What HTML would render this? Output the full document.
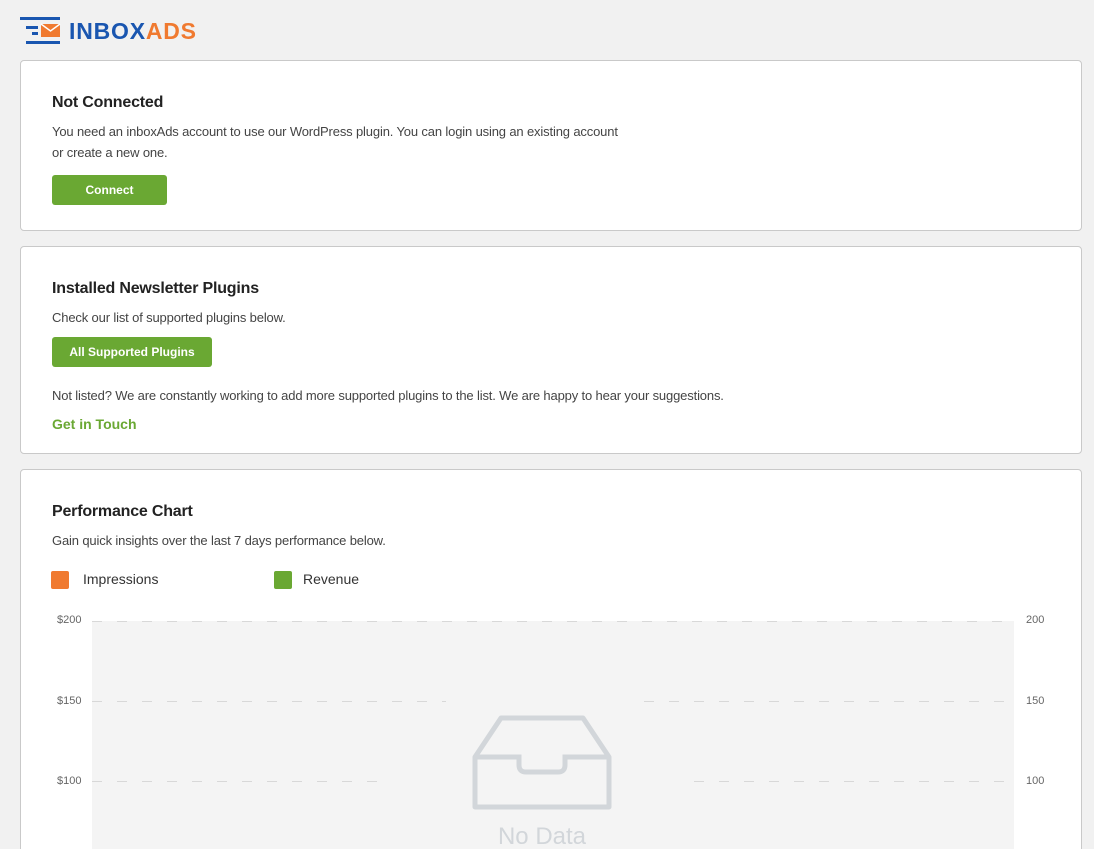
<!DOCTYPE html>
<html><head><meta charset="utf-8"><style>
*{margin:0;padding:0;box-sizing:border-box}
html,body{width:1094px;height:849px;overflow:hidden}
body{background:#f1f1f1;font-family:"Liberation Sans",sans-serif;color:#333;position:relative}
.card{position:absolute;left:20px;width:1062px;background:#fff;border:1px solid #c9c9c9;border-radius:4px}
.t{position:absolute;left:31px;font-size:16px;font-weight:bold;color:#222;letter-spacing:-0.2px}
.p{position:absolute;left:31px;font-size:13px;color:#444;line-height:21px;letter-spacing:-0.15px}
.btn{position:absolute;left:31px;background:#6aa833;color:#fff;font-size:12px;font-weight:bold;border-radius:3px;text-align:center}
.ax{position:absolute;font-size:11px;color:#666}
.dash{position:absolute;height:1px;background:repeating-linear-gradient(90deg,#d8d8d8 0 10px,transparent 10px 25px)}
</style></head><body>
<svg style="position:absolute;left:20px;top:16px" width="42" height="30" viewBox="0 0 42 30">
<rect x="0" y="1" width="40" height="3" fill="#1a56b0"/>
<rect x="6" y="10" width="12" height="3" fill="#1a56b0"/>
<rect x="12" y="16" width="6" height="3" fill="#1a56b0"/>
<rect x="6" y="25" width="34" height="3" fill="#1a56b0"/>
<rect x="21" y="8" width="19" height="13" fill="#f07a30"/>
<path d="M21 8 L30.5 15 L40 8" stroke="#fff" stroke-width="1.5" fill="none"/>
</svg>
<div style="position:absolute;left:69px;top:16px;font-size:23px;font-weight:bold;letter-spacing:0.8px;line-height:30px"><span style="color:#1a56b0">INBOX</span><span style="color:#f07a30">ADS</span></div>

<div class="card" style="top:60px;height:171px">
<div class="t" style="top:33px">Not Connected</div>
<div class="p" style="top:60px">You need an inboxAds account to use our WordPress plugin. You can login using an existing account<br>or create a new one.</div>
<div class="btn" style="top:114px;width:115px;height:30px;line-height:30px">Connect</div>
</div>

<div class="card" style="top:246px;height:208px">
<div class="t" style="top:33px">Installed Newsletter Plugins</div>
<div class="p" style="top:60px">Check our list of supported plugins below.</div>
<div class="btn" style="top:90px;width:160px;height:30px;line-height:30px">All Supported Plugins</div>
<div class="p" style="top:138px">Not listed? We are constantly working to add more supported plugins to the list. We are happy to hear your suggestions.</div>
<div style="position:absolute;left:31px;top:169px;font-size:14px;font-weight:bold;color:#6aa833">Get in Touch</div>
</div>

<div class="card" style="top:469px;height:420px">
<div class="t" style="top:33px">Performance Chart</div>
<div class="p" style="top:60px">Gain quick insights over the last 7 days performance below.</div>
<div style="position:absolute;left:30px;top:101px;width:18px;height:18px;background:#f07a30;border-radius:2px"></div>
<div style="position:absolute;left:62px;top:101px;font-size:14px;color:#333">Impressions</div>
<div style="position:absolute;left:253px;top:101px;width:18px;height:18px;background:#6aa833;border-radius:2px"></div>
<div style="position:absolute;left:282px;top:101px;font-size:14px;color:#333">Revenue</div>
<div style="position:absolute;left:71px;top:151px;width:922px;height:300px;background:#f4f4f4"></div>
<div class="dash" style="left:71px;top:151px;width:922px"></div>
<div class="dash" style="left:71px;top:231px;width:354px"></div>
<div class="dash" style="left:623px;top:231px;width:370px"></div>
<div class="dash" style="left:71px;top:311px;width:287px"></div>
<div class="dash" style="left:673px;top:311px;width:320px"></div>
<div class="ax" style="left:36px;top:144px">$200</div>
<div class="ax" style="left:36px;top:225px">$150</div>
<div class="ax" style="left:36px;top:305px">$100</div>
<div class="ax" style="left:1005px;top:144px">200</div>
<div class="ax" style="left:1005px;top:225px">150</div>
<div class="ax" style="left:1005px;top:305px">100</div>
<svg style="position:absolute;left:450px;top:245px" width="142" height="98" viewBox="0 0 142 98">
<path d="M30 3 L112 3 L138 42 L138 92 L4 92 L4 42 Z" fill="none" stroke="#d2d6da" stroke-width="5" stroke-linejoin="round"/>
<path d="M4 42 L48 42 L48 50 Q48 57 55 57 L87 57 Q94 57 94 50 L94 42 L138 42" fill="none" stroke="#d2d6da" stroke-width="5"/>
</svg>
<div style="position:absolute;left:421px;top:353px;width:200px;text-align:center;font-size:24px;color:#d2d6da">No Data</div>
</div>
</body></html>
